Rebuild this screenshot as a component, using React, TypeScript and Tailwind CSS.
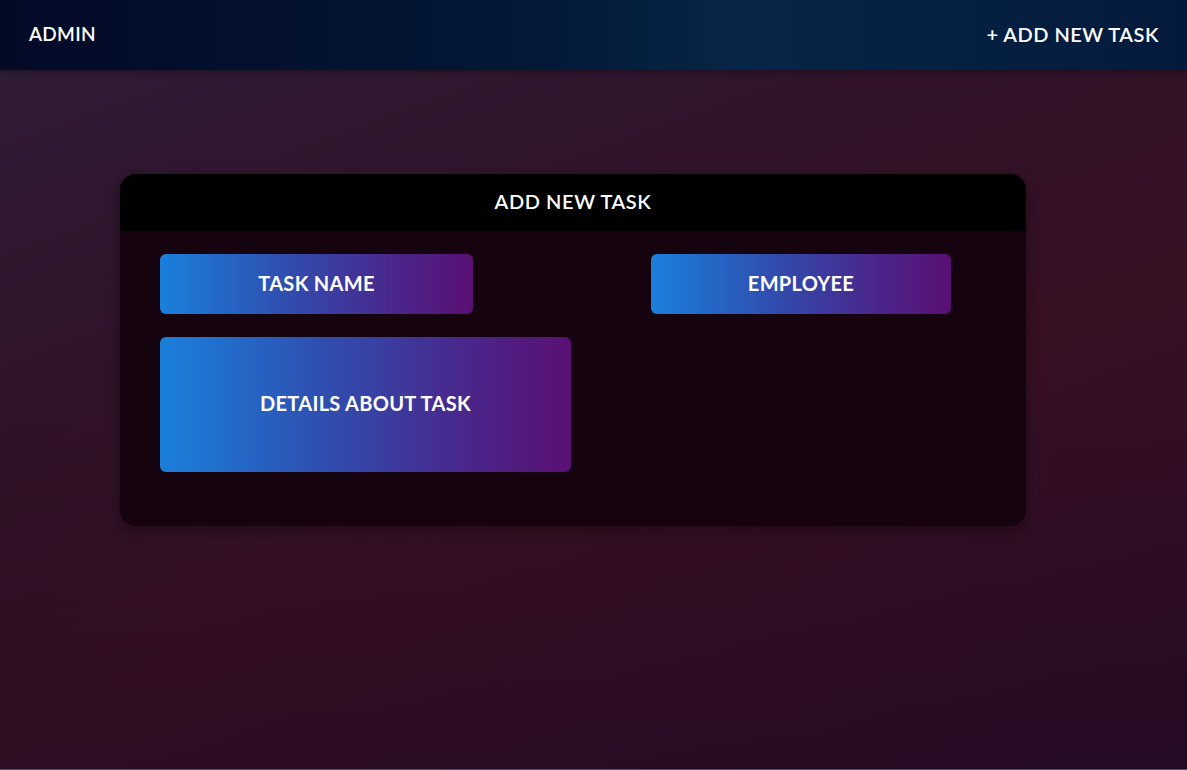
export default function App() {
  const font = { fontFamily: "Lato, 'Noto Sans', sans-serif" };
  const btn =
    "flex items-center justify-center rounded-[6px] bg-[linear-gradient(90deg,#1a80db,#2f4eb0_40%,#472b8f_70%,#5a0f74)] pb-[3px] text-white text-[20px] font-bold tracking-[0.3px]";
  return (
    <div
      style={font}
      className="relative flex h-[770px] w-full flex-col overflow-hidden bg-[linear-gradient(160deg,#2f1e38_0%,#301329_35%,#381024_60%,#2a0c24_100%)]"
    >
      <div className="pointer-events-none absolute inset-0 bg-[linear-gradient(180deg,rgba(0,0,0,0)_50%,rgba(25,8,35,0.3)_100%)]" />
      <header className="relative z-10 flex h-[70px] items-center justify-between bg-[linear-gradient(90deg,#020a26_0%,#041838_45%,#072646_62%,#041a3c_100%)] pb-[2px] pl-[29px] pr-[28px] text-white shadow-[0_2px_6px_rgba(0,0,0,0.35)]">
        <span className="text-[19px] font-semibold tracking-[0.3px]">ADMIN</span>
        <span className="text-[20px] font-semibold tracking-[0.5px]">+ ADD NEW TASK</span>
      </header>
      <main className="relative z-10 flex-1">
        <div className="ml-[120px] mt-[104px] w-[906px] overflow-hidden rounded-[16px] bg-[#15040f] shadow-[0_4px_14px_rgba(0,0,0,0.4)]">
          <div className="flex h-[57px] items-center justify-center bg-black pb-[3px] text-[20px] font-semibold tracking-[0.6px] text-white">
            ADD NEW TASK
          </div>
          <div className="flex gap-[178px] pl-[40px] pt-[23px] pb-[54px]">
            <div className="flex flex-col gap-[23px]">
              <div className={`${btn} h-[60px] w-[313px]`}>TASK NAME</div>
              <div className={`${btn} h-[135px] w-[411px]`}>DETAILS ABOUT TASK</div>
            </div>
            <div className="flex flex-col">
              <div className={`${btn} -ml-[98px] h-[60px] w-[300px]`}>EMPLOYEE</div>
            </div>
          </div>
        </div>
      </main>
      <div className="relative z-10 h-px w-full bg-[#2a56a0]" />
    </div>
  );
}
